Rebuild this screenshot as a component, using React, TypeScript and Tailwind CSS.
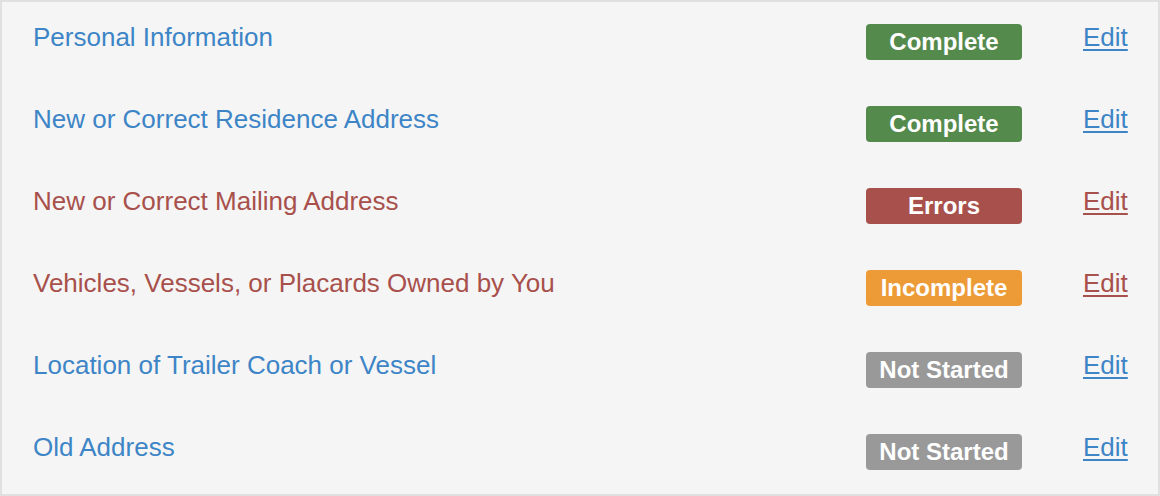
import React from "react";

type Row = { title: string; status: "complete" | "errors" | "incomplete" | "notstarted" };

const rows: Row[] = [
  { title: "Personal Information", status: "complete" },
  { title: "New or Correct Residence Address", status: "complete" },
  { title: "New or Correct Mailing Address", status: "errors" },
  { title: "Vehicles, Vessels, or Placards Owned by You", status: "incomplete" },
  { title: "Location of Trailer Coach or Vessel", status: "notstarted" },
  { title: "Old Address", status: "notstarted" },
];

const badge: Record<Row["status"], { label: string; cls: string }> = {
  complete: { label: "Complete", cls: "bg-[#558a4d]" },
  errors: { label: "Errors", cls: "bg-[#a8504b]" },
  incomplete: { label: "Incomplete", cls: "bg-[#ec9b37]" },
  notstarted: { label: "Not Started", cls: "bg-[#999999]" },
};

export default function App() {
  return (
    <div
      className="w-[1160px] h-[496px] bg-[#f5f5f5] border-2 border-[#e0e0e0] flex flex-col"
      style={{ fontFamily: '"Liberation Sans", Arial, Helvetica, sans-serif' }}
    >
      {rows.map((r, i) => {
        const isRed = r.status === "errors" || r.status === "incomplete";
        const color = isRed ? "text-[#a8504b]" : "text-[#3d85c6]";
        const b = badge[r.status];
        return (
          <div key={i} className="h-[82px] flex items-start pl-[31px] pr-[28px] pt-[20px]">
            <div className={`flex-1 text-[26px] leading-[30px] ${color}`}>{r.title}</div>
            <div
              className={`w-[156px] h-[36px] mt-[2px] rounded-[4px] flex items-center justify-center text-white font-bold text-[24px] leading-[36px] ${b.cls}`}
            >
              {b.label}
            </div>
            <a
              href="#"
              className={`ml-[61px] w-[47px] text-[26px] leading-[30px] underline underline-offset-[3px] ${color}`}
            >
              Edit
            </a>
          </div>
        );
      })}
    </div>
  );
}
